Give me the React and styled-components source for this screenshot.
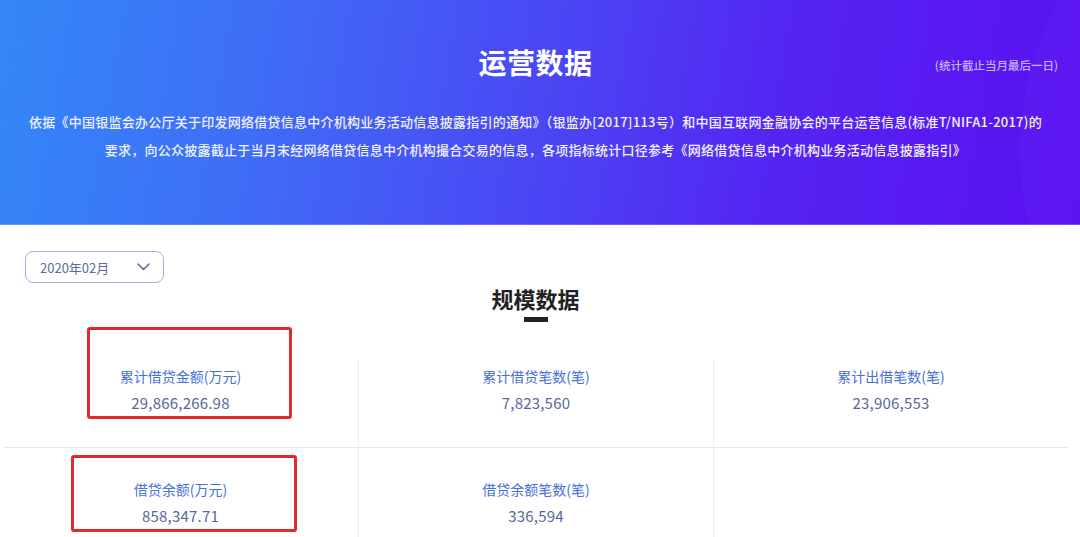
import React from "react";
import styled, { createGlobalStyle } from "styled-components";

const Global = createGlobalStyle`
  html, body { margin: 0; padding: 0; background: #ffffff; }
  body { font-family: "Noto Sans CJK SC", "Noto Sans", "Liberation Sans", sans-serif; }
  * { box-sizing: border-box; }
`;

const Page = styled.div`
  position: relative;
  width: 1080px;
  min-height: 537px;
  overflow: hidden;
  background: #fff;
`;

const Banner = styled.header`
  position: relative;
  height: 225px;
  padding-top: 42px;
  overflow: hidden;
  background: linear-gradient(100deg, #3388f7 0%, #3f6cf6 25%, #4a47f4 50%, #5424f2 72%, #5a10f0 100%);
  &::after {
    content: "";
    position: absolute;
    right: -560px;
    top: -160px;
    width: 620px;
    height: 620px;
    border-radius: 50%;
    background: rgba(255, 255, 255, 0.025);
  }
  &::before {
    content: "";
    position: absolute;
    left: 0;
    right: 0;
    bottom: 0;
    height: 1px;
    background: rgba(200, 210, 255, 0.25);
  }
`;

const BannerInner = styled.div`
  position: relative;
  z-index: 1;
  width: 1071px;
`;

const TitleRow = styled.div`
  display: grid;
  grid-template-columns: 1fr auto 1fr;
  align-items: center;
`;

const Title = styled.h1`
  grid-column: 2;
  margin: 0;
  font-size: 28px;
  line-height: 40px;
  font-weight: 700;
  color: #ffffff;
  letter-spacing: 0.5px;
`;

const Note = styled.span`
  grid-column: 3;
  justify-self: end;
  padding-top: 6px;
  margin-right: 13px;
  font-size: 11.5px;
  font-weight: 500;
  color: #c4b0ff;
  white-space: nowrap;
`;

const Desc = styled.p`
  margin: 26px 0 0;
  text-align: center;
  font-size: 13px;
  line-height: 28px;
  letter-spacing: 0.25px;
  font-weight: 500;
  color: #f1f1ff;
  white-space: nowrap;
`;

const Content = styled.main`
  width: 1071px;
  padding-top: 26px;
`;

const Toolbar = styled.div`
  display: flex;
  padding-left: 25px;
`;

const Select = styled.button`
  display: flex;
  align-items: center;
  justify-content: space-between;
  width: 139px;
  height: 32px;
  padding: 0 13px 0 14px;
  border: 1px solid #9fb2e2;
  border-radius: 8px;
  background: #fff;
  font-family: inherit;
  font-size: 13px;
  color: #5b6c9c;
  cursor: pointer;
`;

const Heading = styled.div`
  display: flex;
  flex-direction: column;
  align-items: center;
`;

const HeadingText = styled.h2`
  margin: 0;
  font-size: 22px;
  line-height: 30px;
  font-weight: 700;
  color: #222;
`;

const HeadingBar = styled.div`
  width: 24px;
  height: 5px;
  margin-top: 4px;
  background: #222;
`;

const Grid = styled.div`
  display: grid;
  grid-template-columns: repeat(3, 355px);
  margin: 38px 0 0 3px;
`;

const Cell = styled.div`
  height: ${(p) => (p.$top ? "88px" : "100px")};
  padding-top: ${(p) => (p.$top ? "5px" : "30px")};
  border-left: ${(p) => (p.$first ? "none" : "1px solid #eaecf1")};
  border-bottom: ${(p) => (p.$top ? "1px solid #e6e9ef" : "none")};
  display: flex;
  flex-direction: column;
  align-items: center;
`;

const Label = styled.div`
  font-size: 14px;
  line-height: 22px;
  color: #4a70d6;
`;

const Value = styled.div`
  margin-top: 4px;
  font-size: 15px;
  line-height: 24px;
  letter-spacing: 0.2px;
  color: #56689b;
`;

const Mark = styled.div`
  position: absolute;
  left: ${(p) => p.$x}px;
  top: ${(p) => p.$y}px;
  width: ${(p) => p.$w}px;
  height: ${(p) => p.$h}px;
  border: 3px solid #e12b2b;
  border-radius: 3px;
  pointer-events: none;
`;

const Chevron = () => (
  <svg width="13" height="8" viewBox="0 0 13 8" fill="none">
    <polyline points="1,1 6.5,6.5 12,1" stroke="#5b6c9c" strokeWidth="1.6" strokeLinecap="round" strokeLinejoin="round" />
  </svg>
);

const rows = [
  [
    { label: "累计借贷金额(万元)", value: "29,866,266.98" },
    { label: "累计借贷笔数(笔)", value: "7,823,560" },
    { label: "累计出借笔数(笔)", value: "23,906,553" },
  ],
  [
    { label: "借贷余额(万元)", value: "858,347.71" },
    { label: "借贷余额笔数(笔)", value: "336,594" },
    null,
  ],
];

export default function App() {
  return (
    <Page>
      <Global />
      <Banner>
        <BannerInner>
          <TitleRow>
            <Title>运营数据</Title>
            <Note>(统计截止当月最后一日)</Note>
          </TitleRow>
          <Desc>
            依据《中国银监会办公厅关于印发网络借贷信息中介机构业务活动信息披露指引的通知》（银监办[2017]113号）和中国互联网金融协会的平台运营信息(标准T/NIFA1-2017)的
            <br />
            要求，向公众披露截止于当月末经网络借贷信息中介机构撮合交易的信息，各项指标统计口径参考《网络借贷信息中介机构业务活动信息披露指引》
          </Desc>
        </BannerInner>
      </Banner>
      <Content>
        <Toolbar>
          <Select>
            <span>2020年02月</span>
            <Chevron />
          </Select>
        </Toolbar>
        <Heading>
          <HeadingText>规模数据</HeadingText>
          <HeadingBar />
        </Heading>
        <Grid>
          {rows.map((row, ri) =>
            row.map((c, ci) => (
              <Cell key={`${ri}-${ci}`} $top={ri === 0} $first={ci === 0}>
                {c && (
                  <>
                    <Label>{c.label}</Label>
                    <Value>{c.value}</Value>
                  </>
                )}
              </Cell>
            ))
          )}
        </Grid>
      </Content>
      <Mark $x={87} $y={327} $w={205} $h={92} />
      <Mark $x={71} $y={455} $w={226} $h={77} />
    </Page>
  );
}
